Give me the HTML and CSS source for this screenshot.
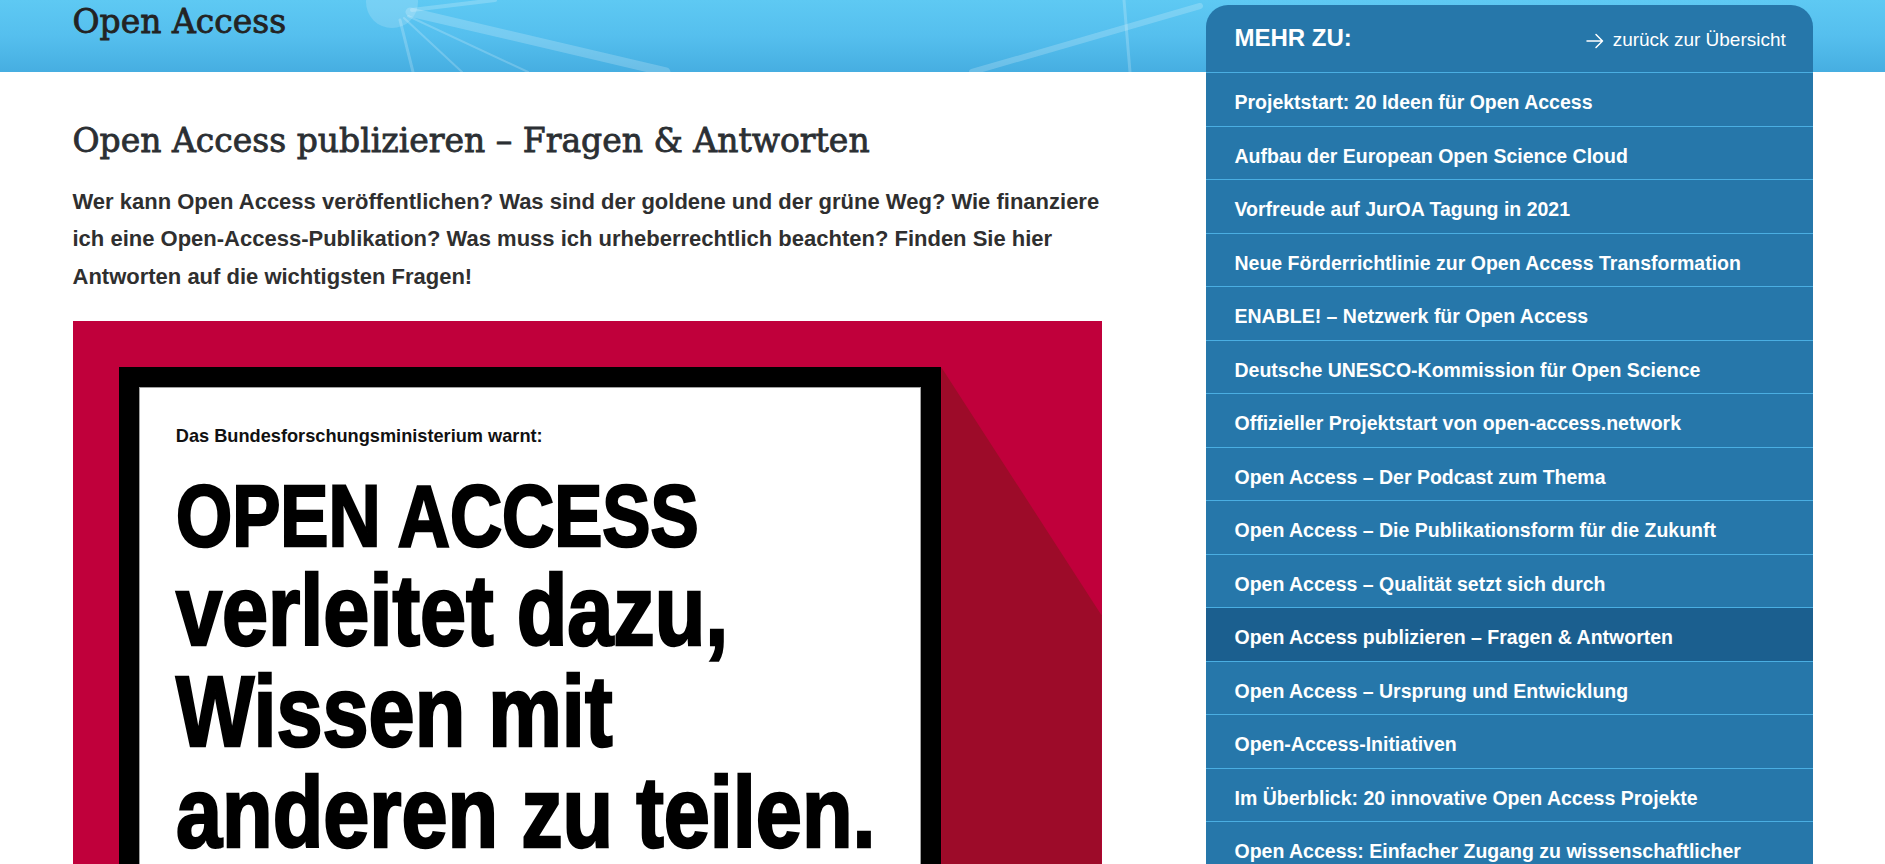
FILE: index.html
```html
<!DOCTYPE html>
<html lang="de">
<head>
<meta charset="utf-8">
<title>Open Access publizieren – Fragen &amp; Antworten</title>
<link rel="stylesheet" href="styles.css">
</head>
<body>
<header class="band">
  <svg class="band-art" width="1885" height="72" viewBox="0 0 1885 72" aria-hidden="true">
    <circle cx="392" cy="2" r="26" fill="#ffffff" fill-opacity="0.16"/>
    <g stroke="#ffffff" stroke-opacity="0.2" fill="none" stroke-linecap="round">
      <line x1="400" y1="20" x2="413" y2="72" stroke-width="3"/>
      <line x1="404" y1="18" x2="462" y2="72" stroke-width="2"/>
      <line x1="408" y1="16" x2="528" y2="72" stroke-width="2"/>
      <line x1="410" y1="12" x2="666" y2="72" stroke-width="9"/>
      <line x1="412" y1="10" x2="495" y2="0" stroke-width="4"/>
      <line x1="1200" y1="6" x2="972" y2="72" stroke-width="6"/>
      <line x1="1124" y1="0" x2="1130" y2="72" stroke-width="3"/>
    </g>
  </svg>
  <div class="wrap">
    <p class="band-title">Open Access</p>
  </div>
</header>

<div class="wrap layout">
  <main class="content">
    <h1 class="title">Open Access publizieren – Fragen &amp; Antworten</h1>
    <p class="lead">Wer kann Open Access veröffentlichen? Was sind der goldene und der grüne Weg? Wie finanziere<br>ich eine Open-Access-Publikation? Was muss ich urheberrechtlich beachten? Finden Sie hier<br>Antworten auf die wichtigsten Fragen!</p>

    <figure class="poster">
      <div class="frame">
        <p class="kicker">Das Bundesforschungsministerium warnt:</p>
        <p class="claim">
          <span class="claim-caps">OPEN ACCESS</span>
          <span class="claim-line">verleitet dazu,</span>
          <span class="claim-line">Wissen mit</span>
          <span class="claim-line">anderen zu teilen.</span>
        </p>
      </div>
    </figure>
  </main>

  <aside class="more">
    <div class="more-head">
      <span class="more-title">MEHR ZU:</span>
      <a class="back" href="#">
        <svg class="back-icon" width="18" height="16" viewBox="0 0 18 16" aria-hidden="true">
          <path d="M1 8 H16.5 M10 1.5 L16.5 8 L10 14.5" fill="none" stroke="#ffffff" stroke-width="1.5" stroke-linecap="round" stroke-linejoin="round"/>
        </svg>
        zurück zur Übersicht
      </a>
    </div>
    <ul class="more-list">
      <li><a href="#">Projektstart: 20 Ideen für Open Access</a></li>
      <li><a href="#">Aufbau der European Open Science Cloud</a></li>
      <li><a href="#">Vorfreude auf JurOA Tagung in 2021</a></li>
      <li><a href="#">Neue Förderrichtlinie zur Open Access Transformation</a></li>
      <li><a href="#">ENABLE! – Netzwerk für Open Access</a></li>
      <li><a href="#">Deutsche UNESCO-Kommission für Open Science</a></li>
      <li><a href="#">Offizieller Projektstart von open-access.network</a></li>
      <li><a href="#">Open Access – Der Podcast zum Thema</a></li>
      <li><a href="#">Open Access – Die Publikationsform für die Zukunft</a></li>
      <li><a href="#">Open Access – Qualität setzt sich durch</a></li>
      <li class="is-active"><a href="#">Open Access publizieren – Fragen &amp; Antworten</a></li>
      <li><a href="#">Open Access – Ursprung und Entwicklung</a></li>
      <li><a href="#">Open-Access-Initiativen</a></li>
      <li><a href="#">Im Überblick: 20 innovative Open Access Projekte</a></li>
      <li><a href="#">Open Access: Einfacher Zugang zu wissenschaftlicher Information</a></li>
    </ul>
  </aside>
</div>
</body>
</html>
```

FILE: styles.css
```css
html, body {
  margin: 0;
  padding: 0;
  background: #ffffff;
}

body {
  font-family: "Liberation Sans", Arial, sans-serif;
  color: #333333;
}

.wrap {
  max-width: 1740px;
  margin: 0 auto;
}

/* ---------- header band ---------- */
.band {
  position: relative;
  height: 72px;
  overflow: hidden;
  background: linear-gradient(180deg, #5ec9f3 0%, #55bfee 50%, #46aee1 100%);
}

.band-art {
  position: absolute;
  left: 0;
  top: 0;
}

.band .wrap {
  position: relative;
}

.band-title {
  margin: 0;
  padding-top: 2px;
  font-family: "DejaVu Serif", "Liberation Serif", serif;
  font-size: 33px;
  line-height: 40px;
  color: #232323;
  -webkit-text-stroke: 0.8px #232323;
}

/* ---------- layout ---------- */
.layout {
  display: flex;
  justify-content: space-between;
  align-items: flex-start;
}

.content {
  width: 1029px;
  flex: 0 0 1029px;
}

/* ---------- article ---------- */
.title {
  margin: 49px 0 0;
  font-family: "DejaVu Serif", "Liberation Serif", serif;
  font-weight: normal;
  font-size: 33px;
  line-height: 40px;
  color: #2b2f33;
  -webkit-text-stroke: 0.8px #2b2f33;
}

.lead {
  margin: 22px 0 0;
  font-family: "Liberation Sans", Arial, sans-serif;
  font-weight: bold;
  font-size: 22px;
  line-height: 37.33px;
  color: #2f2f2f;
  white-space: nowrap;
}

/* ---------- poster ---------- */
.poster {
  position: relative;
  margin: 26.5px 0 0;
  height: 620px;
  overflow: hidden;
  padding: 45.7px 0 0 46.8px;
  box-sizing: border-box;
  background: #c0003b;
}

.poster::before {
  content: "";
  position: absolute;
  left: 868.8px;
  top: 45.7px;
  right: 0;
  bottom: 0;
  background: #9d0b29;
  clip-path: polygon(0 0, 100% 248px, 100% 100%, 0 100%);
}

.frame {
  position: relative;
  z-index: 1;
  width: 822px;
  height: 700px;
  box-sizing: border-box;
  border: 20px solid #000000;
  background: #ffffff;
  box-shadow: inset 0 0 0 1px #a0a0a0;
  padding: 37.5px 0 0 36.5px;
}

.kicker {
  margin: 0;
  font-family: "Liberation Sans", Arial, sans-serif;
  font-weight: bold;
  font-size: 18.2px;
  line-height: 22px;
  color: #111111;
}

.claim {
  margin: 24.7px 0 0;
  font-family: "Liberation Sans", Arial, sans-serif;
  font-weight: bold;
  color: #000000;
  white-space: nowrap;
  transform: scaleX(0.82);
  transform-origin: 0 0;
  -webkit-text-stroke: 2.6px #000000;
}

.claim-caps {
  display: block;
  font-size: 88px;
  line-height: 89px;
}

.claim-line {
  display: block;
  font-size: 101px;
  line-height: 101px;
}

/* ---------- sidebar ---------- */
.more {
  position: relative;
  z-index: 2;
  width: 607px;
  flex: 0 0 607px;
  margin-top: -67px;
  background: #2677aa;
  border-radius: 22px 22px 0 0;
  overflow: hidden;
  color: #ffffff;
}

.more-head {
  height: 67px;
  box-sizing: border-box;
  display: flex;
  align-items: baseline;
  justify-content: space-between;
  padding: 18.3px 26.7px 0 29px;
}

.more-title {
  font-weight: bold;
  font-size: 24px;
  line-height: 30px;
}

.back {
  display: flex;
  align-items: baseline;
  gap: 9px;
  color: #ffffff;
  text-decoration: none;
  font-size: 19px;
  line-height: 24px;
}

.back-icon {
  align-self: center;
  position: relative;
  top: 1px;
}

.more-list {
  list-style: none;
  margin: 0;
  padding: 0;
}

.more-list li {
  border-top: 1px solid #4aaee2;
}

.more-list li.is-active {
  background: #1b5f8f;
}

.more-list a {
  display: block;
  padding: 17px 29px 11.5px;
  font-weight: bold;
  font-size: 19.5px;
  line-height: 24px;
  color: #ffffff;
  text-decoration: none;
}
```
